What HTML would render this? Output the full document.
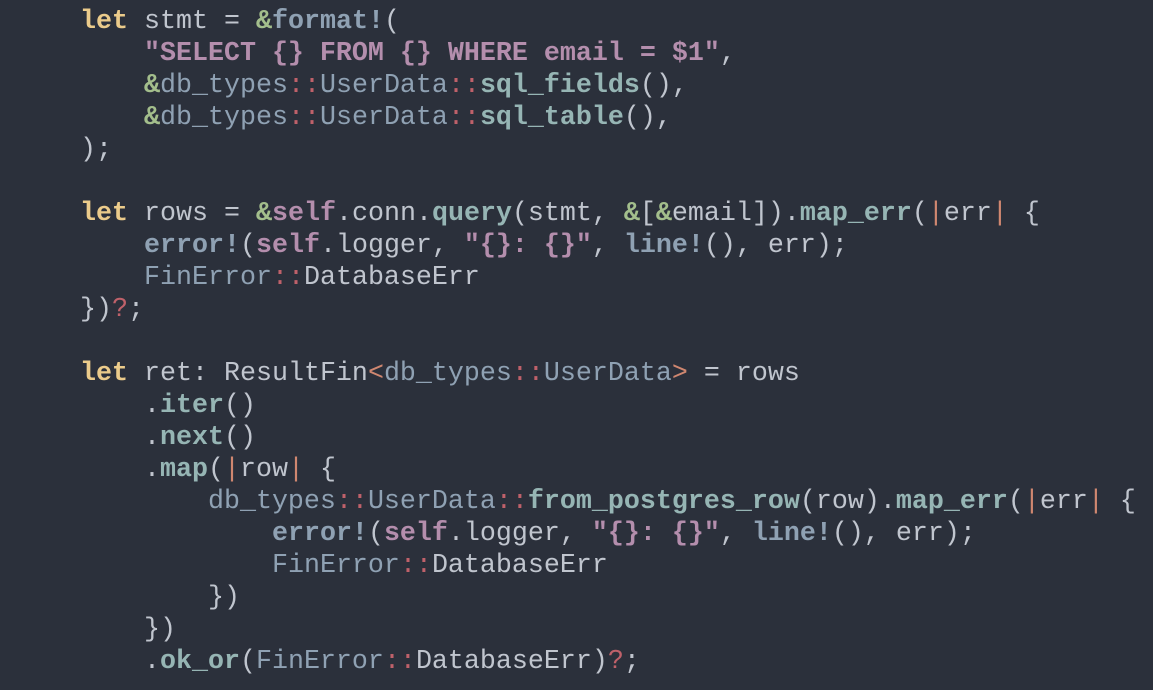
<!DOCTYPE html>
<html><head><meta charset="utf-8"><style>
html,body{margin:0;padding:0;background:#2b303b;width:1153px;height:690px;overflow:hidden}
pre{margin:0;padding:6px 0 0 0;font-family:"Liberation Mono",monospace;font-size:26.67px;line-height:32px;color:#c0c5ce;white-space:pre}
.k{color:#ebcb8b;font-weight:bold}
.a{color:#a3be8c;font-weight:bold}
.m{color:#8fa1b3;font-weight:bold}
.t{color:#8fa1b3}
.s{color:#b48ead;font-weight:bold}
.f{color:#96b5b4;font-weight:bold}
.c{color:#bf616a}
.p{color:#d08770}
.sf{color:#b48ead;font-weight:bold}
</style></head><body><pre>     <span class="k">let</span> stmt = <span class="a">&amp;</span><span class="m">format!</span>(
         <span class="s">"SELECT {} FROM {} WHERE email = $1"</span>,
         <span class="a">&amp;</span><span class="t">db_types</span><span class="c">::</span><span class="t">UserData</span><span class="c">::</span><span class="f">sql_fields</span>(),
         <span class="a">&amp;</span><span class="t">db_types</span><span class="c">::</span><span class="t">UserData</span><span class="c">::</span><span class="f">sql_table</span>(),
     );

     <span class="k">let</span> rows = <span class="a">&amp;</span><span class="sf">self</span>.conn.<span class="f">query</span>(stmt, <span class="a">&amp;</span>[<span class="a">&amp;</span>email]).<span class="f">map_err</span>(<span class="p">|</span>err<span class="p">|</span> {
         <span class="m">error!</span>(<span class="sf">self</span>.logger, <span class="s">"{}: {}"</span>, <span class="m">line!</span>(), err);
         <span class="t">FinError</span><span class="c">::</span>DatabaseErr
     })<span class="c">?</span>;

     <span class="k">let</span> ret: ResultFin<span class="p">&lt;</span><span class="t">db_types</span><span class="c">::</span><span class="t">UserData</span><span class="p">&gt;</span> = rows
         .<span class="f">iter</span>()
         .<span class="f">next</span>()
         .<span class="f">map</span>(<span class="p">|</span>row<span class="p">|</span> {
             <span class="t">db_types</span><span class="c">::</span><span class="t">UserData</span><span class="c">::</span><span class="f">from_postgres_row</span>(row).<span class="f">map_err</span>(<span class="p">|</span>err<span class="p">|</span> {
                 <span class="m">error!</span>(<span class="sf">self</span>.logger, <span class="s">"{}: {}"</span>, <span class="m">line!</span>(), err);
                 <span class="t">FinError</span><span class="c">::</span>DatabaseErr
             })
         })
         .<span class="f">ok_or</span>(<span class="t">FinError</span><span class="c">::</span>DatabaseErr)<span class="c">?</span>;
</pre></body></html>
